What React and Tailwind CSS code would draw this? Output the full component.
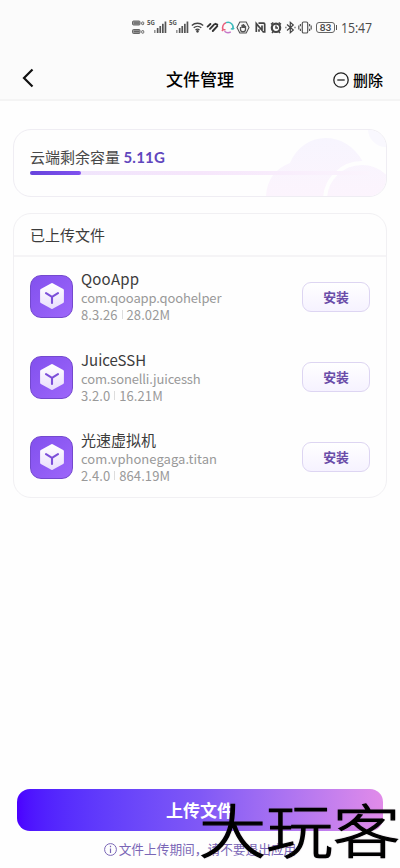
import React from 'react';

const files = [
  { name: 'QooApp', id: 'com.qooapp.qoohelper', version: '8.3.26', size: '28.02M', nameCls: 'tracking-[0.2px]', idCls: 'tracking-[-0.13px]' },
  { name: 'JuiceSSH', id: 'com.sonelli.juicessh', version: '3.2.0', size: '16.21M', nameCls: 'tracking-[0px]', idCls: 'tracking-[-0.15px]' },
  { name: '光速虚拟机', id: 'com.vphonegaga.titan', version: '2.4.0', size: '864.19M', nameCls: '', idCls: 'tracking-[0.05px]' },
];

function Signal() {
  return (
    <div className="relative w-[20px] h-[14px]">
      <span className="absolute left-0 -top-px text-[6px] leading-[7px] font-bold">5G</span>
      <svg className="absolute left-[7px] top-[1px]" width="13" height="12" viewBox="0 0 13 12" fill="#555">
        <rect x="0" y="9" width="1.6" height="3" opacity=".6" />
        <rect x="2.8" y="7" width="1.7" height="5" />
        <rect x="5.4" y="5" width="1.7" height="7" />
        <rect x="8" y="2.8" width="1.7" height="9.2" />
        <rect x="10.6" y="0.5" width="1.7" height="11.5" />
      </svg>
    </div>
  );
}

function StatusBar() {
  return (
    <div className="h-[54px] pl-[132px] pt-[20px] flex items-start text-[#4c4c4c]">
      <svg width="14" height="15" viewBox="0 0 14 15" fill="none" stroke="#666">
        <rect x=".5" y="1" width="7.5" height="4" rx="1" fill="#999" />
        <path d="M2 3h5" strokeWidth="1.3" />
        <rect x="9.7" y="2" width="2" height="2.6" rx=".6" />
        <rect x=".5" y="9.5" width="7.5" height="4" rx="1" fill="#999" />
        <path d="M2 11.5h5" strokeWidth="1.3" />
        <rect x="9.7" y="10.6" width="2" height="2.6" rx=".6" />
      </svg>
      <div className="ml-px flex gap-[2px]"><Signal /><Signal /></div>
      <svg className="ml-[2px]" width="13" height="14" viewBox="0 0 13 14" fill="none" stroke="#444" strokeWidth="1.3">
        <path d="M.8 5.5c3.2-3 8.2-3 11.4 0M2.7 7.8c2.2-2 5.4-2 7.6 0M4.5 10c1.2-1 2.8-1 4 0" />
        <circle cx="6.5" cy="11.3" r=".7" fill="#444" />
      </svg>
      <svg className="ml-[2px]" width="13" height="14" viewBox="0 0 13 14" fill="none" stroke="#333" strokeWidth="1.9" strokeLinecap="round">
        <path d="M1.6 6.6 4.4 4M4 8.8 8 4.6M6.8 11 11.3 6.1M9.3 3.8l2 .9" />
      </svg>
      <svg className="ml-[2px]" width="14" height="15" viewBox="0 0 14 15" fill="none" strokeWidth="1.5">
        <path d="M5 2.8A5 5 0 0 0 2 9.5L1 11M2 9.5l2.5.3" stroke="#e9607d" />
        <path d="M3.5 11.2A5.2 5.2 0 0 0 9.8 11.9" stroke="#c678c8" />
        <path d="M5 2.6A5.2 5.2 0 0 1 11.8 9.3L13.2 8M11.8 9.3 9.8 8.6" stroke="#3fbbbc" />
      </svg>
      <svg className="ml-[1px]" width="14" height="15" viewBox="0 0 14 15" fill="none" stroke="#555" strokeWidth="1.1">
        <path d="M3.8 2h6.4L13 7.5 10.2 13H3.8L1 7.5Z" />
        <path d="M4.5 7v2.5c0 3 5 3 5 0V6M6 8V4.8M7.3 8V4M8.6 8V4.8" strokeWidth="1.3" />
      </svg>
      <svg className="ml-[5px]" width="11" height="14" viewBox="0 0 11 14" fill="none" stroke="#444" strokeWidth="1.7">
        <path d="M1.3 12V3.6L7 10.2V5.5M3.5 3.2h5.2q1 0 1 1v7.6H7.5M4 11.8V9.2" />
      </svg>
      <svg className="ml-[4px]" width="12" height="14" viewBox="0 0 12 14" fill="none" stroke="#444">
        <circle cx="6" cy="7.8" r="4.2" strokeWidth="2.2" />
        <path d="M1 4.3 3.3 2.5M11 4.3 8.7 2.5M2 13l1.2-1.5M10 13l-1.2-1.5M6 5.4V8h2" strokeWidth="1.5" />
      </svg>
      <svg className="ml-[3px]" width="11" height="14" viewBox="0 0 11 14" fill="none" stroke="#444" strokeWidth="1.2">
        <path d="M2 4.5 8.3 10 5.3 12.6V2.4L8.3 5 2 10.5" /><path d="M.4 7.5h1M9.5 7.5h1" strokeWidth="1.6" />
      </svg>
      <svg className="ml-[2px]" width="14" height="14" viewBox="0 0 14 14" fill="none" stroke="#555" strokeWidth="1.2">
        <rect x="4.3" y="2" width="5.4" height="11" rx="1.3" />
        <path d="M2.4 4v2.3M2.4 8.7V11M11.6 4v2.3M11.6 8.7V11M.8 5.5v4M13.2 5.5v4" />
      </svg>
      <div className="ml-[4px] mt-[2px] w-[19px] h-[11px] rounded-[3px] border border-[#666] text-[10px] leading-[9px] font-bold text-center font-['Lato',sans-serif]">83</div>
      <div className="ml-px mt-[5px] w-px h-[5px] bg-[#555]" />
      <div className="ml-[4px] text-[14px] leading-[15px] tracking-[-0.1px] font-['Open_Sans',sans-serif] origin-left scale-x-[0.88]">15:47</div>
    </div>
  );
}

function Header() {
  return (
    <div className="h-[47px] px-4 border-b-2 border-[#f4f4f4] grid grid-cols-3 items-center text-black">
      <svg className="ml-[5px] mt-[3px]" width="14" height="20" viewBox="0 0 14 20" fill="none" stroke="#111" strokeWidth="2.2">
        <path d="M11.5 1.5 3 10l8.5 8.5" />
      </svg>
      <div className="text-center text-[17px] leading-6 font-medium pt-[5px]">文件管理</div>
      <div className="flex items-center justify-end gap-[4px] pt-[7px] pr-px">
        <svg width="16" height="16" viewBox="0 0 16 16" fill="none" stroke="#222" strokeWidth="1.3">
          <circle cx="8" cy="8" r="7.2" /><path d="M4.3 8h7.4" />
        </svg>
        <span className="text-[15px] leading-5 font-medium">删除</span>
      </div>
    </div>
  );
}

function Capacity() {
  return (
    <div className="relative mx-[13px] mt-[28px] h-[68px] rounded-[18px] border border-[#efedf3] overflow-hidden bg-[#fefefe]">
      <svg className="absolute right-0 bottom-0" width="124" height="66" viewBox="0 0 124 66">
        <defs>
          <linearGradient id="cloud" gradientUnits="userSpaceOnUse" x1="0" y1="8" x2="0" y2="66">
            <stop offset="0" stopColor="#f7f5fe" /><stop offset="1" stopColor="#fcf4fd" />
          </linearGradient>
        </defs>
        <path d="M4 66C5 49 14 38 28 33C42 0 84 0 101 32C112 40 114 53 114 66Z" fill="url(#cloud)" />
        <circle cx="124" cy="-1" r="18" fill="#f9f8fe" />
        <circle cx="100" cy="70" r="37" fill="url(#cloud)" stroke="#fefefe" strokeWidth="4" />
      </svg>
      <div className="relative px-4 pt-[17px]">
        <div className="text-[15px] leading-[20px] text-[#484848] whitespace-nowrap">
          云端剩余容量 <span className="font-['Lato',sans-serif] font-bold text-[#6046bd] text-[15px] tracking-[0.25px]">5.11G</span>
        </div>
        <div className="mt-[4px] h-[4px] rounded-full bg-linear-to-r from-[#eee4fc] via-[#f6e6fb] to-[#fbf4fd]">
          <div className="h-full w-[15%] rounded-full bg-linear-to-r from-[#6744dc] to-[#8052ef]" />
        </div>
      </div>
    </div>
  );
}

function AppIcon() {
  return (
    <div className="size-[43px] mb-px shrink-0 rounded-[11px] border border-[#7449ce] bg-linear-to-br from-[#8250ee] to-[#9d66fa] flex items-center justify-center">
      <svg className="mb-px" width="26" height="28" viewBox="0 0 26 28" fill="none">
        <defs>
          <linearGradient id="hex" x1="0" y1="0" x2="0" y2="1">
            <stop offset="0" stopColor="#fff" /><stop offset="1" stopColor="#eadffd" />
          </linearGradient>
        </defs>
        <path d="M13 2.5 23.5 8.2V19.8L13 25.5 2.5 19.8V8.2Z" fill="url(#hex)" stroke="url(#hex)" strokeWidth="2.8" strokeLinejoin="round" />
        <path d="M7 11.2 13 14.8 19 11.2M13 14.8V21" stroke="#7c4fd9" strokeWidth="2.1" strokeLinecap="round" strokeLinejoin="round" />
      </svg>
    </div>
  );
}

function FileList() {
  return (
    <div className="mx-[13px] mt-4 h-[285px] rounded-[18px] border border-[#f1f0f3] bg-[#fefefe]">
      <div className="h-[43px] px-4 pt-[11px] border-b-2 border-[#f5f4f6] text-[15px] leading-[20px] text-[#3c3c3c]">已上传文件</div>
      {files.map((f) => (
        <div key={f.id} className="h-[80.4px] px-4 flex items-center">
          <AppIcon />
          <div className="ml-[8px] flex-1 mb-[2px] whitespace-nowrap">
            <div className={'text-[15px] leading-[20px] text-[#3c3c3c] ' + f.nameCls}>{f.name}</div>
            <div className={'text-[13px] leading-[17px] text-[#999] ' + f.idCls}>{f.id}</div>
            <div className="flex items-center text-[13px] leading-[17px] tracking-[0.08px] text-[#999]">
              {f.version}<span className="mx-[4px] w-px h-[9px] bg-[#ddd]" />{f.size}
            </div>
          </div>
          <button className="w-[68px] h-[30px] mb-px rounded-[9px] border border-[#ddd5f2] bg-linear-to-b from-white to-[#f6f2ff] text-[12.8px] leading-[28px] font-bold text-[#6a4ca8]">安装</button>
        </div>
      ))}
    </div>
  );
}

export default function App() {
  return (
    <div className="relative w-[400px] h-[868px] overflow-hidden bg-[#fefefe] flex flex-col font-['Noto_Sans_CJK_SC',sans-serif]">
      <div className="bg-[#fbfbfb]"><StatusBar /><Header /></div>
      <Capacity />
      <FileList />
      <div className="mt-auto px-[17px] h-[79px]">
        <button className="block w-full h-[42px] rounded-[13px] bg-linear-to-r from-[#4b00ff] via-[#8058f6] to-[#e18be9] text-white text-[17px] leading-[42px] font-bold">上传文件</button>
        <div className="mt-[8px] flex items-center justify-center gap-[2px] text-[12.7px] leading-[20px] text-[#7a66b6] whitespace-nowrap">
          <svg width="13" height="13" viewBox="0 0 13 13" fill="none" stroke="#7a66b6">
            <circle cx="6.5" cy="6.5" r="5.9" /><path d="M6.5 5.5V10M6.5 2.8v1.4" strokeWidth="1.2" />
          </svg>
          文件上传期间，请不要退出应用
        </div>
      </div>
      <div className="absolute left-[199px] top-[795px] w-[201px] h-[80px] origin-top-left scale-y-[0.86] text-[67px] leading-[76px] whitespace-nowrap text-black font-light [-webkit-text-stroke:1.4px_black] [stroke-linejoin:round] [text-shadow:0_0_2px_#806c80]">大玩客</div>
    </div>
  );
}
